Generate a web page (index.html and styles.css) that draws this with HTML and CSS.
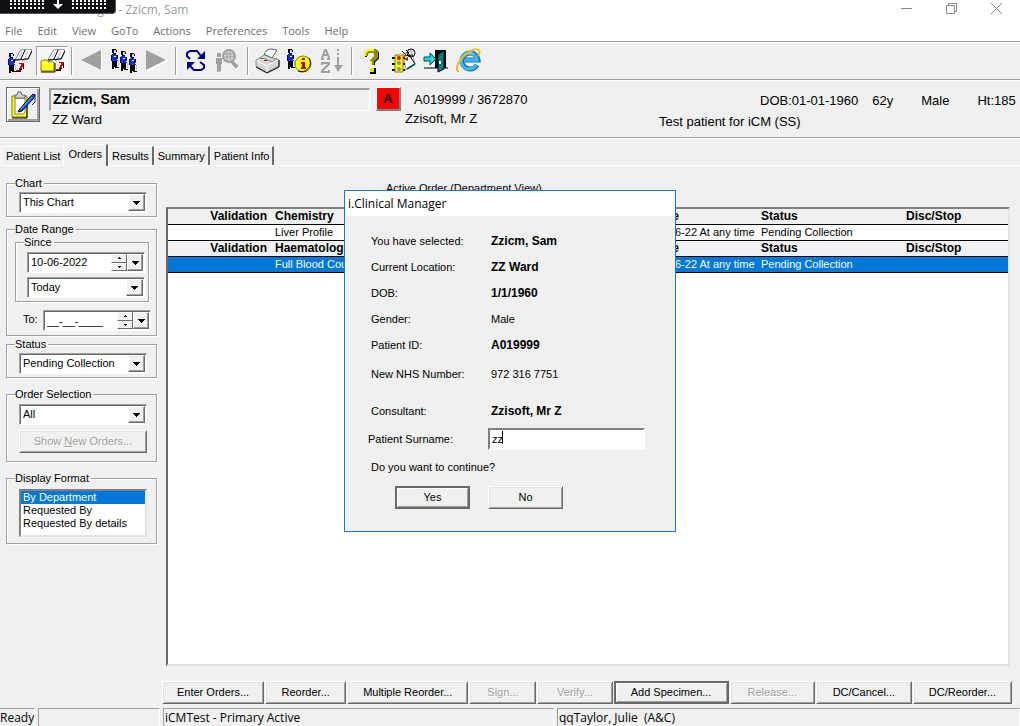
FILE: index.html
```html
<!DOCTYPE html>
<html lang="en">

<head>
    <meta charset="UTF-8">
    <meta name="viewport" content="width=device-width, initial-scale=1.0">
    <title>i.Clinical Manager - Zzicm, Sam</title>
    <link rel="stylesheet" href="styles.css">
</head>

<body>
    <!-- shapes used more than once -->
    <svg class="defs" aria-hidden="true">
        <symbol id="person" viewBox="0 0 8 20">
            <g shape-rendering="crispEdges">
                <path d="M1 0h4v1h1v2H5v2H2V4H1z" fill="#000"/>
                <path d="M3 1h2v3H3z" fill="#d8d8d8"/>
                <path d="M1 5h4v1h2v6H1z" fill="#1030e0"/>
                <path d="M0 6h1v6H0zM6 6h1v2H6z" fill="#000080"/>
                <path d="M5 8h2v1H5z" fill="#000"/>
                <path d="M3 7h2v1H3zM6 10h2v1H6z" fill="#fff"/>
                <path d="M1 12h5v6h2v1H4v-1H3v2H1z" fill="#000"/>
                <path d="M7 12h1v5H7z" fill="#c0c0c0"/>
            </g>
        </symbol>
        <symbol id="book" viewBox="0 0 17 12">
            <path d="M5 2l3-2 2 1 3-1 4 1-4 9h-4l-2 1-3-1-4 1z" fill="#fff" stroke="#808080"/>
            <path d="M10 1L6 10M0 11h4l2-1 2 1 2-1h3l4-8" stroke="#000" fill="none"/>
            <path d="M13 2l-3 7M7 3L4 8" stroke="#b0b0b0"/>
        </symbol>
        <symbol id="redarrow" viewBox="0 0 8 9">
            <path d="M3 0h5v6H7V4H6v2H4v2H0V7h3V5h1V3h1V1H3z" fill="#d00000"/>
            <path d="M0 8h4V6h2v1H5v2H0zM7 6V1h1v5z" fill="#000"/>
        </symbol>
        <symbol id="down" viewBox="0 0 7 4">
            <path d="M0 0h7v1H6v1H5v1H4v1H3V3H2V2H1V1H0z" fill="#000"/>
        </symbol>
    </svg>

    <header class="titlebar">
        <span class="title">i.Clinical Manager - Zzicm, Sam</span>
        <div class="window-buttons">
            <button aria-label="Minimize"><svg width="11" height="11"><path d="M0 5.500h11" stroke="#888"/></svg></button>
            <button aria-label="Restore"><svg width="11" height="11" fill="none" stroke="#888"><path d="M.5 2.500h8v8h-8zM2.500 2.500v-2h8v8h-2"/></svg></button>
            <button aria-label="Close"><svg width="11" height="11"><path d="M0 0l11 11M11 0L0 11" stroke="#888"/></svg></button>
        </div>
    </header>
    <div class="remote-bar">
        <svg width="34" height="10"><path d="M0 1h34M0 4h34M0 8h34" stroke="#fff" stroke-width="2" stroke-dasharray="2 2"/></svg>
        <svg width="10" height="10"><path d="M4 0h2v4h4L5 9 0 4h4z" fill="#fff"/></svg>
        <svg width="34" height="10"><path d="M0 1h34M0 4h34M0 8h34" stroke="#fff" stroke-width="2" stroke-dasharray="2 2"/></svg>
    </div>

    <nav class="menu">
        <a href="#">File</a>
        <a href="#">Edit</a>
        <a href="#">View</a>
        <a href="#">GoTo</a>
        <a href="#">Actions</a>
        <a href="#">Preferences</a>
        <a href="#">Tools</a>
        <a href="#">Help</a>
    </nav>

    <div class="toolbar">
        <button aria-label="Patient list">
            <svg width="26" height="26">
                <use href="#person" x="1" y="5" width="8" height="20"/>
                <use href="#book" x="8" y="1" width="17" height="12"/>
                <use href="#redarrow" x="9" y="15" width="8" height="9"/>
            </svg>
        </button>
        <button class="pressed" aria-label="Open chart">
            <svg width="26" height="26">
                <use href="#book" x="9" y="1" width="17" height="12"/>
                <path d="M2 23V13l2-1h4l2 2h5v9z" fill="#ffff00" stroke="#808000"/>
                <path d="M3 15h11" stroke="#fff"/>
                <path d="M2 24h14V15" stroke="#000" fill="none"/>
                <use href="#redarrow" x="17" y="14" width="8" height="9"/>
            </svg>
        </button>
        <span class="sep"></span>
        <button aria-label="Previous patient"><svg width="24" height="24"><path d="M22 1.500v21L1 12z" fill="#fff"/><path d="M21 1v20L1 11z" fill="#a0a0a0"/></svg></button>
        <button aria-label="Patients">
            <svg width="26" height="26">
                <use href="#person" x="0" y="1" width="8" height="20"/>
                <use href="#person" x="9" y="3" width="8" height="20"/>
                <use href="#person" x="18" y="5" width="8" height="20"/>
            </svg>
        </button>
        <button aria-label="Next patient"><svg width="24" height="24"><path d="M3 2.500v21L24 12z" fill="#fff"/><path d="M2 1v20l20-10z" fill="#a0a0a0"/></svg></button>
        <span class="sep"></span>
        <button aria-label="Refresh">
            <svg width="24" height="24" fill="none" stroke="#000080" stroke-width="2">
                <path d="M6 10L3 7V4l3-2h7l4 5"/>
                <path d="M21 2v8h-8z" fill="#000080" stroke="none"/>
                <path d="M16 13l4 3v3l-3 2h-7l-4-4"/>
                <path d="M3 13v8l8-8z" fill="#000080" stroke="none"/>
            </svg>
        </button>
        <button aria-label="Find patient">
            <svg width="26" height="26">
                <g fill="#a0a0a0">
                    <path d="M2 5h4v4H2zM1 10h6v6H6v8H2v-8H1z"/>
                    <path d="M17 12l7 6-3 3-6-7z"/>
                </g>
                <circle cx="14" cy="8" r="6" fill="#d8d8d8" stroke="#a0a0a0" stroke-width="2"/>
                <path d="M9 6h10M9 9h10M12 3v10M15 3v10" stroke="#a0a0a0"/>
                <path d="M21 21l4-3M7 24h-4" stroke="#fff"/>
            </svg>
        </button>
        <span class="sep"></span>
        <button aria-label="Print">
            <svg width="26" height="26">
                <path d="M1 12l8-5 15 5v6l-12 6L1 18z" fill="#d8d8d8" stroke="#909090"/>
                <path d="M24 12v7l-12 6-11-6" fill="none" stroke="#000"/>
                <path d="M2 13l10 5v6M13 17l10-5" fill="none" stroke="#fff"/>
                <path d="M9 6l3-4 4-1 6 1-5 8z" fill="#fff" stroke="#606060"/>
                <path d="M8 10l9 4 5-4" stroke="#808080" fill="none"/>
                <path d="M5 10h3v1H5z" fill="#00a000"/>
                <path d="M9 12h3v1H9z" fill="#d00000"/>
            </svg>
        </button>
        <button aria-label="Patient information">
            <svg width="26" height="26">
                <use href="#person" x="0" y="1" width="8" height="20"/>
                <circle cx="16" cy="16" r="8" fill="#ffff00" stroke="#808000"/>
                <path d="M22 10a9 9 0 0 1-11 13" fill="none" stroke="#000"/>
                <path d="M15 10h3v2h-3zM14 14h4v5h1v2h-5v-2h1v-3h-1z" fill="#c00000"/>
            </svg>
        </button>
        <button aria-label="Sort">
            <svg width="24" height="26" fill="none" stroke="#a0a0a0" stroke-width="2">
                <path d="M1 11h3M7 11h3M2 10l3-8h1l3 8M3 7h5"/>
                <path d="M2 17v-2h7v1l-7 7v1h7v-2"/>
                <path d="M18 1v2M18 5v2M18 9v10"/>
                <path d="M14 17h9l-5 7z" fill="#a0a0a0" stroke="none"/>
            </svg>
        </button>
        <span class="sep"></span>
        <button aria-label="Help">
            <svg width="24" height="26">
                <path d="M6 9V5l3-3h6l3 3v5l-4 4v3M11 21h4v4h-4z" fill="none" stroke="#000" stroke-width="2"/>
                <path d="M6 8V5l3-2h5l2 2v4l-4 4v4" fill="none" stroke="#909000" stroke-width="4"/>
                <path d="M5 8V5l3-3h6M11 13v4" fill="none" stroke="#ffff00" stroke-width="2"/>
                <path d="M10 20h4v4h-4z" fill="#e0e000"/>
            </svg>
        </button>
        <button aria-label="Status">
            <svg width="26" height="26">
                <path d="M12 6l8-3 4 13-9 6z" fill="#fff" stroke="#a0a0a0"/>
                <circle cx="20" cy="5" r="4" fill="none" stroke="#000"/>
                <path d="M11 3l4 4M13 8l9-1M17 5l7 11M15 2l3 3" stroke="#000" fill="none"/>
                <path d="M16 21l8-5" stroke="#006060" stroke-width="2"/>
                <path d="M13 11l4-2v4z" fill="#d00000"/>
                <path d="M1 9h13v2H1zM1 15h13v2H1zM1 21h13v2H1z" fill="#000"/>
                <path d="M4 7h8v17H4z" fill="#ffff00" stroke="#808000"/>
                <circle cx="8" cy="10" r="2" fill="#e00000"/>
                <circle cx="8" cy="15" r="2" fill="#909090"/>
                <circle cx="8" cy="21" r="2" fill="#909090"/>
            </svg>
        </button>
        <button aria-label="Exit">
            <svg width="26" height="26">
                <path d="M12 2h11v18H12z" fill="#000"/>
                <path d="M1 20h24" stroke="#000" stroke-width="1"/>
                <path d="M15 21V7l6-5v19l-6 3z" fill="#008080" stroke="#000"/>
                <path d="M16 13h2v3h-2z" fill="#fff"/>
                <path d="M1 9h6V5l6 6-6 6v-4H1z" fill="#20d8e0" stroke="#004848"/>
            </svg>
        </button>
        <button aria-label="Internet Explorer">
            <svg width="26" height="26" fill="none">
                <path d="M22 17a8 8 0 1 1 1-5H10" stroke="#1478b8" stroke-width="5"/>
                <path d="M21 17a8 8 0 1 1 1-5H10" stroke="#42b8ec" stroke-width="3"/>
                <path d="M9 7a8 8 0 0 1 9-1" stroke="#a8e4fa"/>
                <path d="M4 24c-4-2-2-9 4-15S22-1 24 3c1 1 0 4-1 5" stroke="#f4b823" stroke-width="2"/>
            </svg>
        </button>
    </div>

    <section class="patient">
        <button class="clipboard" aria-label="Notes">
            <svg width="28" height="30">
                <path d="M3 6h15v21H3z" fill="#ffff00" stroke="#808000"/>
                <path d="M3 28h15V11" stroke="#000" fill="none"/>
                <path d="M6 8h10v14l-2 2H6z" fill="#fff" stroke="#808080"/>
                <path d="M6 8V5h2l1-3h3l1 3h3v3z" fill="#d8d8d8" stroke="#606060"/>
                <path d="M10 20l11-13 3-3 2 1-2 4-11 12-4 1z" fill="#1858c8" stroke="#000060"/>
                <path d="M12 19L23 7" stroke="#58c8f0"/>
                <path d="M26 4v8l-3 3" stroke="#202040" fill="none"/>
            </svg>
        </button>
        <div class="who">
            <div class="name">Zzicm, Sam</div>
            <div class="ward">ZZ Ward</div>
        </div>
        <button class="alert">A</button>
        <div class="ids">
            <div class="number">A019999 / 3672870</div>
            <div>Zzisoft, Mr Z</div>
        </div>
        <div class="details">
            <div class="facts"><span>DOB:01-01-1960</span><span>62y</span><span>Male</span><span>Ht:185</span></div>
            <div>Test patient for iCM (SS)</div>
        </div>
    </section>

    <nav class="tabs">
        <a href="#">Patient List</a>
        <a href="#" class="active">Orders</a>
        <a href="#">Results</a>
        <a href="#">Summary</a>
        <a href="#">Patient Info</a>
    </nav>

    <main>
        <aside>
            <fieldset>
                <legend>Chart</legend>
                <div class="combo"><select aria-label="Chart"><option>This Chart</option></select><span class="drop"><svg width="7" height="4"><use href="#down"/></svg></span></div>
            </fieldset>
            <fieldset class="dates">
                <legend>Date Range</legend>
                <fieldset>
                    <legend>Since</legend>
                    <div class="combo">
                        <input type="text" aria-label="Since" value="10-06-2022">
                        <span class="spin"><button aria-label="Later"><svg width="3" height="2"><path d="M1 0h1v1h1v1H0V1h1z"/></svg></button><button aria-label="Earlier"><svg width="3" height="2"><path d="M0 0h3v1H2v1H1V1H0z"/></svg></button></span>
                        <span class="drop slim"><svg width="7" height="4"><use href="#down"/></svg></span>
                    </div>
                    <div class="combo"><select aria-label="Period"><option>Today</option></select><span class="drop"><svg width="7" height="4"><use href="#down"/></svg></span></div>
                </fieldset>
                <div class="to">
                    <label for="to-date">To:</label>
                    <div class="combo">
                        <input type="text" id="to-date" value="__-__-____">
                        <span class="spin"><button aria-label="Later"><svg width="3" height="2"><path d="M1 0h1v1h1v1H0V1h1z"/></svg></button><button aria-label="Earlier"><svg width="3" height="2"><path d="M0 0h3v1H2v1H1V1H0z"/></svg></button></span>
                        <span class="drop slim"><svg width="7" height="4"><use href="#down"/></svg></span>
                    </div>
                </div>
            </fieldset>
            <fieldset class="status">
                <legend>Status</legend>
                <div class="combo"><select aria-label="Status"><option>Pending Collection</option></select><span class="drop"><svg width="7" height="4"><use href="#down"/></svg></span></div>
            </fieldset>
            <fieldset class="selection">
                <legend>Order Selection</legend>
                <div class="combo"><select aria-label="Order Selection"><option>All</option></select><span class="drop"><svg width="7" height="4"><use href="#down"/></svg></span></div>
                <button class="btn" disabled>Show <u>N</u>ew Orders...</button>
            </fieldset>
            <fieldset class="format">
                <legend>Display Format</legend>
                <select class="list" size="3" aria-label="Display Format">
                    <option selected>By Department</option>
                    <option>Requested By</option>
                    <option>Requested By details</option>
                </select>
            </fieldset>
        </aside>

        <section class="orders">
            <h1>Active Order (Department View)</h1>
            <div class="grid">
                <table>
                    <colgroup><col class="c-valid"><col class="c-name"><col class="c-date"><col class="c-status"><col></colgroup>
                    <tr><th>Validation</th><th>Chemistry</th><th>Date</th><th>Status</th><th>Disc/Stop</th></tr>
                    <tr><td></td><td>Liver Profile</td><td>10-06-22 At any time</td><td>Pending Collection</td><td></td></tr>
                    <tr><th>Validation</th><th>Haematology</th><th>Date</th><th>Status</th><th>Disc/Stop</th></tr>
                    <tr class="selected"><td></td><td>Full Blood Count</td><td>10-06-22 At any time</td><td>Pending Collection</td><td></td></tr>
                </table>
            </div>
            <div class="actions">
                <button class="btn">Enter Orders...</button>
                <button class="btn">Reorder...</button>
                <button class="btn">Multiple Reorder...</button>
                <button class="btn" disabled>Sign...</button>
                <button class="btn" disabled>Verify...</button>
                <button class="btn default">Add Specimen...</button>
                <button class="btn" disabled>Release...</button>
                <button class="btn">DC/Cancel...</button>
                <button class="btn">DC/Reorder...</button>
            </div>
        </section>
    </main>

    <footer class="statusbar">
        <span class="s-ready">Ready</span>
        <span class="s-blank"></span>
        <span class="s-env">iCMTest - Primary Active</span>
        <span class="s-user">qqTaylor, Julie&nbsp; (A&amp;C)</span>
    </footer>

    <div class="dialog" role="dialog" aria-labelledby="dialog-title">
        <h2 id="dialog-title">i.Clinical Manager</h2>
        <div class="fields">
            <span>You have selected:</span><b>Zzicm, Sam</b>
            <span>Current Location:</span><b>ZZ Ward</b>
            <span>DOB:</span><b>1/1/1960</b>
            <span>Gender:</span><span>Male</span>
            <span>Patient ID:</span><b>A019999</b>
            <span>New NHS Number:</span><span>972 316 7751</span>
            <span class="apart">Consultant:</span><b class="apart">Zzisoft, Mr Z</b>
            <label for="surname">Patient Surname:</label>
            <div class="entry"><input type="text" id="surname" value="zz"><i class="caret"></i></div>
            <span class="question">Do you want to continue?</span>
        </div>
        <div class="answers">
            <button class="btn default">Yes</button>
            <button class="btn">No</button>
        </div>
    </div>
</body>

</html>
```
FILE: styles.css
```css
* {
    box-sizing: border-box;
}

body {
    margin: 0;
    height: 100vh;
    display: flex;
    flex-direction: column;
    overflow: hidden;
    background-color: #f0f0f0;
    color: #000;
    font-family: "Liberation Sans", Arial, sans-serif;
    font-size: 11px;
    line-height: 13px;
    white-space: nowrap;
}

button, input, select {
    font: inherit;
    color: inherit;
    margin: 0;
    padding: 0;
    border: 0;
    border-radius: 0;
}

a {
    color: inherit;
    text-decoration: none;
}

svg {
    display: block;
}

.defs {
    position: absolute;
    width: 0;
    height: 0;
}

/* title, menu and toolbar */
.titlebar {
    display: flex;
    justify-content: space-between;
    height: 20px;
    padding: 0 18px 0 17px;
    background-color: #fff;
    color: #999;
    font-family: "Open Sans", "Noto Sans", sans-serif;
}

.title {
    font-size: 12px;
    line-height: 20px;
}

.window-buttons {
    display: flex;
    gap: 34px;
    align-items: flex-start;
    padding-top: 3px;
}

.window-buttons button {
    background: none;
}

.remote-bar {
    position: absolute;
    top: 0;
    left: 0;
    width: 116px;
    height: 14px;
    display: flex;
    justify-content: center;
    gap: 9px;
    border: 1px solid #555;
    border-top: 0;
    border-left: 0;
    border-radius: 0 0 4px 0;
    background-color: #101014;
}

.menu {
    display: flex;
    gap: 15px;
    flex: none;
    height: 22px;
    padding-left: 5px;
    line-height: 22px;
    background-color: #fff;
    border-bottom: 1px solid #a0a0a0;
    color: #6d6d6d;
    font-family: "Open Sans", "Noto Sans", sans-serif;
}

.toolbar {
    display: flex;
    flex: none;
    align-items: center;
    height: 38px;
    padding: 0 4px;
    border-top: 1px solid #fff;
    border-bottom: 1px solid #a0a0a0;
}

.toolbar button {
    display: flex;
    align-items: center;
    justify-content: center;
    width: 32px;
    height: 30px;
    background: none;
}

.toolbar .pressed {
    background-color: #f8f8f8;
    border: 1px solid #a0a0a0;
    border-right-color: #fff;
    border-bottom-color: #fff;
}

.sep {
    width: 8px;
    height: 28px;
    background: linear-gradient(90deg, #a0a0a0 1px, #fff 1px, #fff 2px, transparent 2px) 3px 0 no-repeat;
}

/* patient banner */
.patient {
    display: flex;
    flex: none;
    height: 58px;
    padding: 6px 0 0 6px;
    border-top: 1px solid #fff;
    border-bottom: 1px solid #a0a0a0;
    font-size: 13px;
    line-height: 19px;
    overflow: hidden;
}

.clipboard {
    display: flex;
    flex: none;
    align-items: center;
    justify-content: center;
    width: 34px;
    height: 35px;
    background-color: #f0f0f0;
    border: 1px solid #696969;
    box-shadow: inset 1px 1px #fff, inset -2px -2px #a0a0a0;
}

.who {
    flex: none;
    width: 321px;
    margin: 1px 0 0 9px;
}

.name {
    height: 23px;
    padding-left: 2px;
    border: 1px solid #fff;
    border-width: 2px 1px 1px 2px;
    border-top-color: #a0a0a0;
    border-left-color: #a0a0a0;
    font-size: 14px;
    font-weight: bold;
}

.ward {
    padding-left: 3px;
    line-height: 18px;
}

.alert {
    flex: none;
    width: 25px;
    height: 24px;
    margin-left: 6px;
    background-color: #ff0000;
    border: 1px solid #fff;
    border-width: 1px 2px 2px 1px;
    border-right-color: #808080;
    border-bottom-color: #808080;
    font-weight: bold;
}

.ids {
    flex: none;
    width: 258px;
    padding: 3px 0 0 4px;
}

.number {
    padding-left: 9px;
}

.details {
    flex: 1;
    min-width: 0;
    padding-top: 3px;
    line-height: 21px;
}

.facts {
    display: flex;
    gap: 14px;
    padding-left: 101px;
}

.facts span {
    flex: none;
}

.facts span + span + span {
    margin-left: 14px;
}

/* tabs */
.tabs {
    display: flex;
    flex: none;
    align-items: flex-end;
    height: 28px;
    padding-left: 1px;
    border-top: 1px solid #fff;
    border-bottom: 1px solid #fff;
}

.tabs a {
    height: 19px;
    padding: 0 3px;
    line-height: 18px;
    border: 1px solid #fff;
    border-right: 2px solid #696969;
    border-bottom: 0;
}

.tabs a:first-child {
    padding-left: 4px;
    border-right: 0;
}

.tabs .active {
    height: 22px;
    margin-bottom: -1px;
    padding: 0 4px;
    background-color: #f0f0f0;
}

main {
    display: flex;
    flex: 1;
    min-height: 0;
}

/* filters */
aside {
    flex: none;
    width: 157px;
    padding: 11px 0 0 6px;
}

fieldset {
    min-width: 0;
    margin: 0 0 6px;
    padding: 3px 9px 3px 12px;
    border: 1px solid #a0a0a0;
    box-shadow: inset 1px 1px #fff, 1px 1px #fff;
}

legend {
    margin-left: -4px;
    padding: 0 2px 0 0;
    line-height: 12px;
}

.combo {
    display: flex;
    height: 21px;
    background-color: #fff;
    border: 1px solid #a0a0a0;
    border-right-color: #fff;
    border-bottom-color: #fff;
    box-shadow: inset 1px 1px #696969;
    padding: 1px;
}

.combo select, .combo input {
    flex: 1;
    min-width: 0;
    padding-left: 2px;
    appearance: none;
    background: none;
}

.drop {
    display: flex;
    flex: none;
    align-items: center;
    justify-content: center;
    width: 17px;
    background-color: #f0f0f0;
    border: 1px solid #fff;
    border-right-color: #696969;
    border-bottom-color: #696969;
    box-shadow: inset -1px -1px #a0a0a0;
}

.slim {
    width: 16px;
}

.spin {
    display: flex;
    flex: none;
    flex-direction: column;
    width: 16px;
}

.spin button {
    display: flex;
    flex: 1;
    align-items: center;
    justify-content: center;
    background-color: #f0f0f0;
    border: 1px solid #fff;
    border-right-color: #696969;
    border-bottom-color: #696969;
}

.dates {
    margin-bottom: 2px;
    padding: 1px 5px 4px 8px;
}

.dates fieldset {
    margin: 0 2px 8px 0;
    padding: 4px 3px 3px 11px;
}

.dates legend {
    margin-left: -3px;
}

.dates > legend {
    margin-left: 0;
}

.dates fieldset .combo + .combo {
    margin-top: 4px;
}

.to {
    display: flex;
    gap: 5px;
    padding-left: 8px;
    line-height: 18px;
}

.to .combo {
    flex: 1;
    min-width: 0;
}

.status, .selection {
    margin-bottom: 10px;
}

.selection {
    padding-top: 4px;
    padding-bottom: 8px;
}

.selection .btn {
    width: 100%;
    margin-top: 5px;
}

.format {
    padding-top: 5px;
    padding-bottom: 6px;
}

.list {
    display: block;
    width: 100%;
    height: 48px;
    padding: 0;
    overflow: hidden;
    background-color: #fff;
    border: 2px solid #e3e3e3;
    border-top-color: #808080;
    border-left-color: #808080;
}

.list option {
    height: 13px;
    min-height: 13px;
    padding: 0 2px;
    line-height: 14px;
}

.list option:checked {
    background: #0078d7 linear-gradient(#0078d7, #0078d7);
    -webkit-text-fill-color: #fff;
}

/* order list */
.orders {
    display: flex;
    flex: 1;
    flex-direction: column;
    min-width: 0;
    padding: 15px 8px 4px 5px;
}

.orders h1 {
    margin: 0 0 13px 224px;
    font-size: 11px;
    font-weight: normal;
    line-height: 14px;
}

.grid {
    flex: 1;
    margin: -1px 2px 0 4px;
    background-color: #fff;
    border: 2px solid #e3e3e3;
    border-top-color: #808080;
    border-left-color: #696969;
}

table {
    width: 100%;
    table-layout: fixed;
    border-spacing: 0;
}

.c-valid {
    width: 107px;
}

.c-name {
    width: 378px;
}

.c-date {
    width: 108px;
}

.c-status {
    width: 145px;
}

th, td {
    height: 16px;
    padding: 0;
    line-height: 15px;
    text-align: left;
    border-bottom: 1px solid #000;
}

th {
    background-color: #f0f0f0;
    font-size: 12px;
}

th:first-child {
    padding-right: 8px;
    text-align: right;
}

td:nth-child(3) {
    padding-right: 10px;
    text-align: right;
}

.selected {
    background-color: #0078d7;
    color: #fff;
}

/* push buttons */
.btn {
    height: 23px;
    background-color: #f0f0f0;
    border: 1px solid #fff;
    border-right-color: #696969;
    border-bottom-color: #696969;
    box-shadow: inset 1px 1px #e3e3e3, inset -1px -1px #a0a0a0;
}

.btn:disabled {
    color: #a0a0a0;
    text-shadow: 1px 1px #fff;
}

.default {
    border: 2px solid #696969;
    box-shadow: inset 1px 1px #fff, inset -1px -1px #a0a0a0;
}

.actions {
    display: grid;
    grid-template-columns: 102fr 81fr 121fr 67fr 75fr 115fr 85fr 96fr 99fr;
    gap: 1px;
    margin-top: 15px;
}

/* status bar */
.statusbar {
    display: flex;
    flex: none;
    gap: 3px;
    height: 18px;
    font-family: "Open Sans", "Noto Sans", sans-serif;
    font-size: 12px;
    line-height: 17px;
}

.statusbar span {
    padding-left: 1px;
    border: 1px solid #a0a0a0;
    border-right-color: #fff;
    border-bottom: 0;
}

.s-ready {
    width: 35px;
}

.statusbar .s-ready {
    padding: 0;
    border-left: 0;
}

.s-blank {
    width: 122px;
}

.s-env {
    width: 391px;
}

.s-user {
    flex: 1;
}

/* confirmation dialog */
.dialog {
    position: absolute;
    top: 190px;
    left: 344px;
    width: 332px;
    padding-bottom: 22px;
    background-color: #f0f0f0;
    border: 1px solid #1979c8;
}

.dialog h2 {
    margin: 0;
    padding-left: 3px;
    background-color: #fff;
    font-family: "Open Sans", "Noto Sans", sans-serif;
    font-size: 12px;
    font-weight: normal;
    line-height: 25px;
}

.fields {
    display: grid;
    grid-template-columns: 120px 154px;
    grid-template-rows: repeat(5, 26px) 32px 38px 22px 34px;
    align-items: center;
    padding: 12px 0 2px 26px;
}

.fields b {
    font-size: 12px;
}

.fields label {
    margin-left: -3px;
}

.apart {
    padding-top: 4px;
}

.question {
    grid-column: 1 / 3;
}

.entry {
    display: flex;
    height: 22px;
    margin-left: -3px;
    padding: 1px 2px;
    background-color: #fff;
    border: 2px solid #fff;
    border-top-color: #808080;
    border-left-color: #808080;
    position: relative;
}

.entry input {
    flex: 1;
    min-width: 0;
    height: 15px;
    background: none;
    outline: 0;
}

.caret {
    position: absolute;
    top: 1px;
    left: 12px;
    width: 1px;
    height: 13px;
    background-color: #000;
}

.answers {
    display: flex;
    gap: 18px;
    padding-left: 50px;
}

.answers .btn {
    width: 75px;
}
```
